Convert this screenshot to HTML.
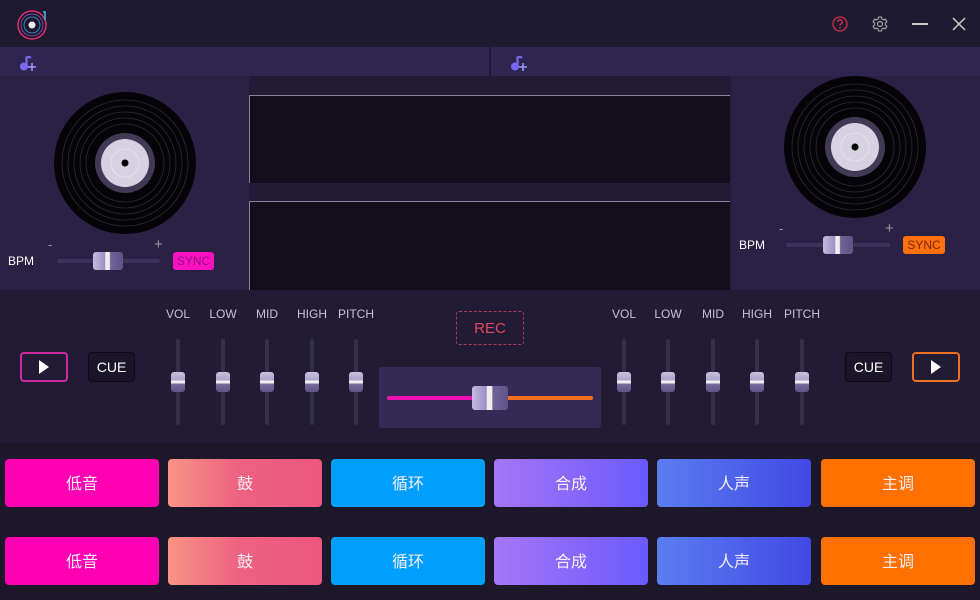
<!DOCTYPE html>
<html><head><meta charset="utf-8"><style>
*{margin:0;padding:0;box-sizing:border-box}
body{width:980px;height:600px;overflow:hidden;background:#1c1829;font-family:"Liberation Sans","Noto Sans CJK SC",sans-serif;position:relative;color:#fff}
.a{position:absolute}
.lbl{font-size:12px;color:#c8c2d6;text-align:center;width:50px}
.trk{width:4px;height:86px;background:#34304c;border-radius:2px}
.th{width:14px;height:20px;border-radius:3px;background:linear-gradient(#c9c2e0 0,#aea5cb 40%,#eee 45%,#eee 55%,#776c9c 60%,#5e5485 100%)}
.pad{position:absolute;width:154px;height:48px;border-radius:4px;font-size:16px;color:#f4eef8;text-align:center;line-height:52px}
.hth{background:linear-gradient(90deg,#c4bbe0 0,#9b90c4 40%,#eee 42%,#eee 55%,#6e6498 58%,#5e5488 100%);border-radius:3px}
</style></head><body>
<div class="a" style="left:0;top:0;width:980px;height:47px;background:#1e1a30"></div>
<svg class="a" style="left:15px;top:8px" width="34" height="32" viewBox="0 0 34 32">
<circle cx="17" cy="17" r="14" fill="#1a1530" stroke="#e0306a" stroke-width="1.5"/>
<circle cx="17" cy="17" r="11" fill="none" stroke="#7a4aa0" stroke-width="1"/>
<circle cx="17" cy="17" r="8" fill="none" stroke="#3a8ab0" stroke-width="1"/>
<circle cx="17" cy="17" r="3.5" fill="#eee"/>
<path d="M28 4 L30 4 L30 12" stroke="#40c0e0" stroke-width="1.5" fill="none"/>
</svg>
<svg class="a" style="left:831px;top:15px" width="18" height="18" viewBox="0 0 18 18"><circle cx="9" cy="9" r="7" fill="none" stroke="#d0304a" stroke-width="1.3"/><path d="M6.8 7a2.2 2.2 0 1 1 3 2c-.7.3-.8.8-.8 1.5" fill="none" stroke="#d0304a" stroke-width="1.3"/><circle cx="9" cy="12.8" r=".8" fill="#d0304a"/></svg>
<svg class="a" style="left:871px;top:15px" width="18" height="18" viewBox="0 0 18 18"><circle cx="9" cy="9" r="2.5" fill="none" stroke="#aaa" stroke-width="1.2"/><path d="M7.5 2h3l.4 2 1.6.9 1.9-.7 1.5 2.6-1.5 1.3v1.8l1.5 1.3-1.5 2.6-1.9-.7-1.6.9-.4 2h-3l-.4-2-1.6-.9-1.9.7-1.5-2.6 1.5-1.3V8.1L2.1 6.8l1.5-2.6 1.9.7 1.6-.9z" fill="none" stroke="#aaa" stroke-width="1.1"/></svg>
<div class="a" style="left:912px;top:23px;width:16px;height:2px;background:#ccc"></div>
<svg class="a" style="left:952px;top:17px" width="14" height="14"><path d="M1 1L13 13M13 1L1 13" stroke="#ccc" stroke-width="1.5"/></svg>
<div class="a" style="left:0;top:47px;width:980px;height:29px;background:#2e2550"></div>
<div class="a" style="left:489px;top:47px;width:2px;height:29px;background:#1e1a30"></div>
<svg class="a" style="left:19px;top:54px" width="18" height="18" viewBox="0 0 18 18"><circle cx="5" cy="12.5" r="4" fill="#7a68f0"/><path d="M7.5 12V3.5Q10 2 12 4" stroke="#7a68f0" stroke-width="2.2" fill="none"/><path d="M13 9v8M9 13h8" stroke="#a898ff" stroke-width="1.5"/></svg>
<svg class="a" style="left:510px;top:54px" width="18" height="18" viewBox="0 0 18 18"><circle cx="5" cy="12.5" r="4" fill="#7a68f0"/><path d="M7.5 12V3.5Q10 2 12 4" stroke="#7a68f0" stroke-width="2.2" fill="none"/><path d="M13 9v8M9 13h8" stroke="#a898ff" stroke-width="1.5"/></svg>
<div class="a" style="left:0;top:76px;width:249px;height:214px;background:#2a2145"></div>
<div class="a" style="left:249px;top:76px;width:482px;height:214px;background:#221b37"></div>
<div class="a" style="left:731px;top:76px;width:249px;height:214px;background:#2a2145"></div>
<div class="a" style="left:249px;top:95px;width:481px;height:88px;background:#120e1c;border-top:1px solid #8a8098;border-left:1px solid #8a8098"></div>
<div class="a" style="left:249px;top:201px;width:481px;height:89px;background:#120e1c;border-top:1px solid #8a8098;border-left:1px solid #8a8098"></div>
<svg class="a" style="left:53px;top:91px" width="144" height="144" viewBox="0 0 144 144">
<circle cx="72" cy="72" r="71" fill="#050408"/>
<g fill="none" stroke="#2c2934" stroke-width="0.8"><circle cx="72" cy="72" r="63"/><circle cx="72" cy="72" r="57"/><circle cx="72" cy="72" r="51"/><circle cx="72" cy="72" r="45"/><circle cx="72" cy="72" r="39"/></g>
<circle cx="72" cy="72" r="30" fill="#403a54"/><circle cx="72" cy="72" r="24" fill="#d6d2e2"/><circle cx="72" cy="72" r="14" fill="none" stroke="#e8e6f0" stroke-width="0.8"/><circle cx="72" cy="72" r="3.5" fill="#000"/></svg>
<svg class="a" style="left:783px;top:75px" width="144" height="144" viewBox="0 0 144 144">
<circle cx="72" cy="72" r="71" fill="#050408"/>
<g fill="none" stroke="#2c2934" stroke-width="0.8"><circle cx="72" cy="72" r="63"/><circle cx="72" cy="72" r="57"/><circle cx="72" cy="72" r="51"/><circle cx="72" cy="72" r="45"/><circle cx="72" cy="72" r="39"/></g>
<circle cx="72" cy="72" r="30" fill="#403a54"/><circle cx="72" cy="72" r="24" fill="#d6d2e2"/><circle cx="72" cy="72" r="14" fill="none" stroke="#e8e6f0" stroke-width="0.8"/><circle cx="72" cy="72" r="3.5" fill="#000"/></svg>
<div class="a" style="left:8px;top:254px;font-size:12px">BPM</div>
<div class="a" style="left:48px;top:237px;font-size:13px;color:#999">-</div>
<div class="a" style="left:154px;top:236px;font-size:15px;color:#999">+</div>
<div class="a" style="left:57px;top:259px;width:103px;height:4px;background:#3a3258;border-radius:2px"></div>
<div class="a hth" style="left:93px;top:252px;width:30px;height:18px"></div>
<div class="a" style="left:173px;top:252px;width:41px;height:18px;background:#ff10c0;border-radius:3px;color:#8a1080;font-size:12px;text-align:center;line-height:18px">SYNC</div>
<div class="a" style="left:739px;top:238px;font-size:12px">BPM</div>
<div class="a" style="left:779px;top:221px;font-size:13px;color:#999">-</div>
<div class="a" style="left:885px;top:220px;font-size:15px;color:#999">+</div>
<div class="a" style="left:786px;top:243px;width:104px;height:4px;background:#3a3258;border-radius:2px"></div>
<div class="a hth" style="left:823px;top:236px;width:30px;height:18px"></div>
<div class="a" style="left:903px;top:236px;width:42px;height:18px;background:#ff7010;border-radius:3px;color:#7a2a00;font-size:12px;text-align:center;line-height:18px">SYNC</div>
<div class="a" style="left:0;top:290px;width:980px;height:153px;background:#211b35"></div>
<div class="a" style="left:20px;top:352px;width:48px;height:30px;border:2px solid #d02aa0;border-radius:4px"></div>
<svg class="a" style="left:38px;top:360px" width="12" height="14"><path d="M1 0L11 7L1 14Z" fill="#fff"/></svg>
<div class="a" style="left:88px;top:352px;width:47px;height:30px;border:1px solid #0c0a16;background:#1a1528;border-radius:4px;font-size:14px;text-align:center;line-height:28px">CUE</div>
<div class="a" style="left:845px;top:352px;width:47px;height:30px;border:1px solid #0c0a16;background:#1a1528;border-radius:4px;font-size:14px;text-align:center;line-height:28px">CUE</div>
<div class="a" style="left:912px;top:352px;width:48px;height:30px;border:2px solid #ee7020;border-radius:4px"></div>
<svg class="a" style="left:930px;top:360px" width="12" height="14"><path d="M1 0L11 7L1 14Z" fill="#fff"/></svg>
<div class="a lbl" style="left:153px;top:307px">VOL</div><div class="a lbl" style="left:198px;top:307px">LOW</div><div class="a lbl" style="left:242px;top:307px">MID</div><div class="a lbl" style="left:287px;top:307px">HIGH</div><div class="a lbl" style="left:331px;top:307px">PITCH</div>
<div class="a lbl" style="left:599px;top:307px">VOL</div><div class="a lbl" style="left:643px;top:307px">LOW</div><div class="a lbl" style="left:688px;top:307px">MID</div><div class="a lbl" style="left:732px;top:307px">HIGH</div><div class="a lbl" style="left:777px;top:307px">PITCH</div>
<div class="a trk" style="left:176px;top:339px"></div><div class="a trk" style="left:221px;top:339px"></div><div class="a trk" style="left:265px;top:339px"></div><div class="a trk" style="left:310px;top:339px"></div><div class="a trk" style="left:354px;top:339px"></div>
<div class="a trk" style="left:622px;top:339px"></div><div class="a trk" style="left:666px;top:339px"></div><div class="a trk" style="left:711px;top:339px"></div><div class="a trk" style="left:755px;top:339px"></div><div class="a trk" style="left:800px;top:339px"></div>
<div class="a th" style="left:171px;top:372px"></div><div class="a th" style="left:216px;top:372px"></div><div class="a th" style="left:260px;top:372px"></div><div class="a th" style="left:305px;top:372px"></div><div class="a th" style="left:349px;top:372px"></div>
<div class="a th" style="left:617px;top:372px"></div><div class="a th" style="left:661px;top:372px"></div><div class="a th" style="left:706px;top:372px"></div><div class="a th" style="left:750px;top:372px"></div><div class="a th" style="left:795px;top:372px"></div>
<div class="a" style="left:456px;top:311px;width:68px;height:34px;border:1px dashed #b03a50;border-radius:3px;color:#e04a5a;font-size:15px;text-align:center;line-height:34px">REC</div>
<div class="a" style="left:379px;top:367px;width:222px;height:61px;background:#342a55;border-radius:3px"></div>
<div class="a" style="left:387px;top:396px;width:88px;height:4px;background:#ee10b0;border-radius:2px"></div>
<div class="a" style="left:505px;top:396px;width:88px;height:4px;background:#f07020;border-radius:2px"></div>
<div class="a hth" style="left:472px;top:386px;width:36px;height:24px"></div>
<div class="pad" style="left:5px;top:459px;background:#ff00b2">低音</div>
<div class="pad" style="left:168px;top:459px;background:linear-gradient(90deg,#fa9484,#ee6282 45%,#ec5680)">鼓</div>
<div class="pad" style="left:331px;top:459px;background:#009ffd">循环</div>
<div class="pad" style="left:494px;top:459px;background:linear-gradient(90deg,#a676f6,#6a5afc)">合成</div>
<div class="pad" style="left:657px;top:459px;background:linear-gradient(90deg,#5a7ef0,#4248e4)">人声</div>
<div class="pad" style="left:821px;top:459px;background:#ff7000">主调</div>
<div class="pad" style="left:5px;top:537px;background:#ff00b2">低音</div>
<div class="pad" style="left:168px;top:537px;background:linear-gradient(90deg,#fa9484,#ee6282 45%,#ec5680)">鼓</div>
<div class="pad" style="left:331px;top:537px;background:#009ffd">循环</div>
<div class="pad" style="left:494px;top:537px;background:linear-gradient(90deg,#a676f6,#6a5afc)">合成</div>
<div class="pad" style="left:657px;top:537px;background:linear-gradient(90deg,#5a7ef0,#4248e4)">人声</div>
<div class="pad" style="left:821px;top:537px;background:#ff7000">主调</div>
</body></html>
